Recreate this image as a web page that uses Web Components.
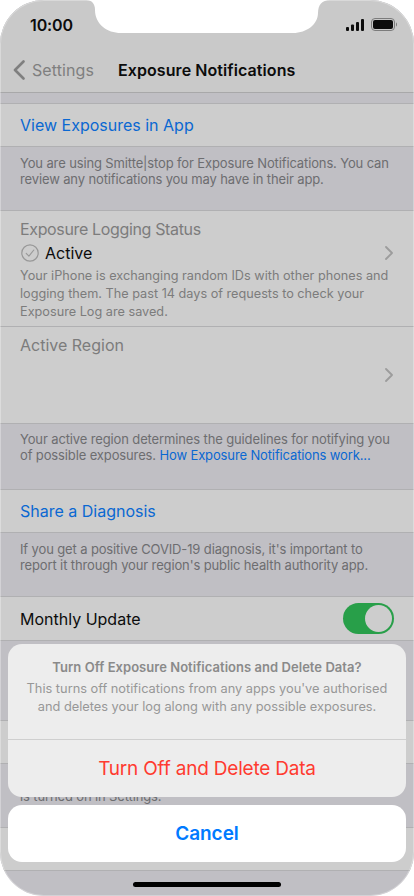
<!DOCTYPE html>
<html>
<head>
<meta charset="utf-8">
<title>Exposure Notifications</title>
<style>
html, body { margin: 0; background: #fff; }
body { font-family: Inter, "Noto Sans", sans-serif; }
</style>
</head>
<body>
<phone-frame>
  <status-bar></status-bar>
  <nav-bar back="Settings" title="Exposure Notifications"></nav-bar>
  <foot-note height="10"></foot-note>
  <link-row>View Exposures in App</link-row>
  <foot-note height="63" top="8">You are using Smitte|stop for Exposure Notifications. You can<br>review any notifications you may have in their app.</foot-note>
  <logging-group></logging-group>
  <foot-note height="65" top="7">Your active region determines the guidelines for notifying you<br>of possible exposures. <span style="color:#0a68d2">How Exposure Notifications work...</span></foot-note>
  <link-row>Share a Diagnosis</link-row>
  <foot-note height="63" top="8">If you get a positive COVID-19 diagnosis, it's important to<br>report it through your region's public health authority app.</foot-note>
  <toggle-row>Monthly Update</toggle-row>
  <foot-note height="79"></foot-note>
  <link-row></link-row>
  <foot-note height="63" top="24">is turned on in Settings.</foot-note>
  <link-row></link-row>
  <action-sheet
    heading="Turn Off Exposure Notifications and Delete Data?"
    message="This turns off notifications from any apps you've authorised and deletes your log along with any possible exposures."
    action="Turn Off and Delete Data"
    cancel="Cancel"></action-sheet>
  <home-bar></home-bar>
</phone-frame>

<script>
class PhoneFrame extends HTMLElement {
    constructor() {
        super();
        this.shadowDOM = this.attachShadow({ mode: "open" });
        this.shadowDOM.innerHTML = `
        <style>
        :host {
            display: block;
            position: relative;
            width: 414px;
            height: 896px;
            overflow: hidden;
            border-radius: 44px;
            background: #c0bfc4;
            font-family: Inter, "Noto Sans", sans-serif;
        }
        svg {
            position: absolute;
            left: 0;
            top: 0;
        }
        .edge {
            position: absolute;
            inset: 0;
            border-radius: 44px;
            box-shadow: inset 0 0 0 1px rgba(255, 255, 255, 0.3);
        }
        </style>
        <slot></slot>
        <div class="edge"></div>
        <svg width="414" height="34" viewBox="0 0 414 34">
            <path fill="#fff" d="M86 0C92 0 95 4 95 10C95 24 107 33 121 33H293C307 33 318 24 318 13C318 5 322 0 330 0Z"/>
        </svg>
        `;
    }
}

class StatusBar extends HTMLElement {
    constructor() {
        super();
        this.shadowDOM = this.attachShadow({ mode: "open" });
        this.shadowDOM.innerHTML = `
        <style>
        :host {
            display: flex;
            align-items: center;
            justify-content: space-between;
            height: 49px;
            padding: 0 17px 0 30px;
            background: #c9c9c9;
            color: #0c0c0c;
        }
        .time {
            font-size: 16px;
            font-weight: 600;
            letter-spacing: -0.1px;
        }
        .icons {
            display: flex;
            align-items: center;
            gap: 7px;
        }
        svg { display: block; }
        </style>
        <span class="time">10:00</span>
        <div class="icons">
            <svg width="18" height="12" viewBox="0 0 18 12">
                <rect x="0" y="8" width="3" height="4" rx="1" fill="#0c0c0c"/>
                <rect x="5" y="5.5" width="3" height="6.5" rx="1" fill="#0c0c0c"/>
                <rect x="10" y="3" width="3" height="9" rx="1" fill="#0c0c0c"/>
                <rect x="15" y="0" width="3" height="12" rx="1" fill="#0c0c0c"/>
            </svg>
            <svg width="26" height="13" viewBox="0 0 26 13">
                <rect x="0.5" y="0.5" width="23" height="12" rx="3.5" fill="none" stroke="#7c7c7c"/>
                <rect x="2" y="2" width="20" height="9" rx="2" fill="#0c0c0c"/>
                <path d="M25 4.5c.8.3 1 1.2 1 2s-.2 1.7-1 2z" fill="#7c7c7c"/>
            </svg>
        </div>
        `;
    }
}

class NavBar extends HTMLElement {
    constructor() {
        super();
        this.shadowDOM = this.attachShadow({ mode: "open" });
    }

    connectedCallback() {
        this.shadowDOM.innerHTML = `
        <style>
        :host {
            display: flex;
            align-items: center;
            box-sizing: border-box;
            height: 44px;
            padding: 0 0 1px 13px;
            background: #c9c9c9;
            border-bottom: 1px solid #a8a8a9;
        }
        svg { display: block; }
        .back {
            margin-left: 7px;
            width: 86px;
            font-size: 16px;
            letter-spacing: 0.1px;
            color: #7f7f7f;
        }
        .title {
            font-size: 16px;
            font-weight: 600;
            letter-spacing: 0.08px;
            color: #0c0c0c;
        }
        </style>
        <svg width="12" height="20" viewBox="0 0 12 20">
            <path d="M10.5 1.5L2 10l8.5 8.5" fill="none" stroke="#7f7f7f" stroke-width="2.6" stroke-linecap="round" stroke-linejoin="round"/>
        </svg>
        <span class="back">${this.getAttribute("back")}</span>
        <span class="title">${this.getAttribute("title")}</span>
        `;
    }
}

class LinkRow extends HTMLElement {
    constructor() {
        super();
        this.shadowDOM = this.attachShadow({ mode: "open" });
        this.shadowDOM.innerHTML = `
        <style>
        :host {
            display: flex;
            align-items: center;
            box-sizing: border-box;
            height: 44px;
            padding: 0 20px;
            background: #cdcdcd;
            border-top: 1px solid #b0b0b2;
            border-bottom: 1px solid #b0b0b2;
            font-size: 16px;
            color: #0a68d2;
        }
        </style>
        <slot></slot>
        `;
    }
}

class FootNote extends HTMLElement {
    constructor() {
        super();
        this.shadowDOM = this.attachShadow({ mode: "open" });
    }

    connectedCallback() {
        this.shadowDOM.innerHTML = `
        <style>
        :host {
            display: block;
            box-sizing: border-box;
            height: ${this.getAttribute("height")}px;
            padding: ${this.getAttribute("top") || 0}px 20px 0;
            background: #c0bfc4;
            font-size: 13px;
            line-height: 16px;
            letter-spacing: -0.13px;
            color: #6d6d70;
        }
        </style>
        <slot></slot>
        `;
    }
}

class LoggingGroup extends HTMLElement {
    constructor() {
        super();
        this.shadowDOM = this.attachShadow({ mode: "open" });
        const chevron = `<svg class="chev" width="8" height="14" viewBox="0 0 8 14">
            <path d="M1 1l6 6-6 6" fill="none" stroke="#9c9c9c" stroke-width="1.8" stroke-linecap="round" stroke-linejoin="round"/>
        </svg>`;
        this.shadowDOM.innerHTML = `
        <style>
        :host {
            display: block;
            background: #cdcdcd;
            border-top: 1px solid #b0b0b2;
            border-bottom: 1px solid #b0b0b2;
            font-size: 16px;
        }
        .item { padding-left: 20px; }
        .first { height: 115px; border-bottom: 1px solid #b0b0b2; }
        .label {
            display: block;
            padding-top: 8px;
            line-height: 20px;
            color: #7c7c7c;
        }
        .first .label { letter-spacing: -0.35px; }
        .status {
            display: flex;
            align-items: center;
            height: 28px;
            padding-right: 21px;
            color: #0c0c0c;
        }
        .status svg:first-child { margin-right: 6px; margin-left: 1px; }
        .status span { flex: 1; }
        p {
            margin: 0;
            padding-right: 20px;
            font-size: 12.7px;
            line-height: 18px;
            color: #7c7c7c;
        }
        .second { height: 96px; }
        .spacer {
            display: flex;
            justify-content: flex-end;
            padding: 13px 21px 0 0;
        }
        svg { display: block; }
        </style>
        <div class="item first">
            <span class="label">Exposure Logging Status</span>
            <div class="status">
                <svg width="18" height="18" viewBox="0 0 18 18">
                    <circle cx="9" cy="9" r="8.2" fill="none" stroke="#989898" stroke-width="1.2"/>
                    <path d="M5.2 9.3l2.7 2.9 4.9-6.2" fill="none" stroke="#989898" stroke-width="1.1" stroke-linecap="round" stroke-linejoin="round"/>
                </svg>
                <span>Active</span>
                ${chevron}
            </div>
            <p>Your iPhone is exchanging random IDs with other phones and logging them. The past 14 days of requests to check your Exposure Log are saved.</p>
        </div>
        <div class="item second">
            <span class="label">Active Region</span>
            <div class="spacer">${chevron}</div>
        </div>
        `;
    }
}

class ToggleRow extends HTMLElement {
    constructor() {
        super();
        this.shadowDOM = this.attachShadow({ mode: "open" });
        this.shadowDOM.innerHTML = `
        <style>
        :host {
            display: flex;
            align-items: center;
            justify-content: space-between;
            box-sizing: border-box;
            height: 45px;
            padding: 0 20px;
            background: #cdcdcd;
            border-top: 1px solid #b0b0b2;
            border-bottom: 1px solid #b0b0b2;
            font-size: 16px;
            color: #0c0c0c;
        }
        .switch {
            display: flex;
            justify-content: flex-end;
            box-sizing: border-box;
            width: 51px;
            height: 31px;
            padding: 2px;
            border-radius: 16px;
            background: #289f49;
        }
        .knob {
            width: 27px;
            height: 27px;
            border-radius: 50%;
            background: #cdcdcd;
        }
        </style>
        <slot></slot>
        <div class="switch"><div class="knob"></div></div>
        `;
    }
}

class ActionSheet extends HTMLElement {
    constructor() {
        super();
        this.shadowDOM = this.attachShadow({ mode: "open" });
    }

    connectedCallback() {
        this.shadowDOM.innerHTML = `
        <style>
        :host {
            position: absolute;
            left: 8px;
            right: 8px;
            top: 644px;
            display: flex;
            flex-direction: column;
            gap: 8px;
            text-align: center;
        }
        .group {
            border-radius: 14px;
            background: #ededed;
        }
        .info {
            box-sizing: border-box;
            height: 96px;
            padding: 15px 10px 0;
            border-bottom: 1px solid #cfcfcf;
        }
        .heading {
            font-size: 13px;
            line-height: 16px;
            font-weight: 600;
            letter-spacing: 0.04px;
            color: #8a8a8a;
        }
        .message {
            margin-top: 5px;
            font-size: 12.8px;
            line-height: 18px;
            color: #979797;
        }
        .action {
            display: flex;
            align-items: center;
            justify-content: center;
            height: 57px;
            font-size: 19px;
            letter-spacing: -0.2px;
            color: #ff3b30;
        }
        .cancel {
            display: flex;
            align-items: center;
            justify-content: center;
            height: 57px;
            border-radius: 14px;
            background: #fff;
            font-size: 19px;
            font-weight: 600;
            letter-spacing: -0.05px;
            color: #007aff;
        }
        </style>
        <div class="group">
            <div class="info">
                <div class="heading">${this.getAttribute("heading")}</div>
                <div class="message">${this.getAttribute("message")}</div>
            </div>
            <div class="action">${this.getAttribute("action")}</div>
        </div>
        <div class="cancel">${this.getAttribute("cancel")}</div>
        `;
    }
}

class HomeBar extends HTMLElement {
    constructor() {
        super();
        this.shadowDOM = this.attachShadow({ mode: "open" });
        this.shadowDOM.innerHTML = `
        <style>
        :host {
            position: absolute;
            left: 133px;
            top: 882px;
            width: 148px;
            height: 5px;
            border-radius: 3px;
            background: #000;
        }
        </style>
        `;
    }
}

customElements.define("phone-frame", PhoneFrame);
customElements.define("status-bar", StatusBar);
customElements.define("nav-bar", NavBar);
customElements.define("link-row", LinkRow);
customElements.define("foot-note", FootNote);
customElements.define("logging-group", LoggingGroup);
customElements.define("toggle-row", ToggleRow);
customElements.define("action-sheet", ActionSheet);
customElements.define("home-bar", HomeBar);
</script>
</body>
</html>
